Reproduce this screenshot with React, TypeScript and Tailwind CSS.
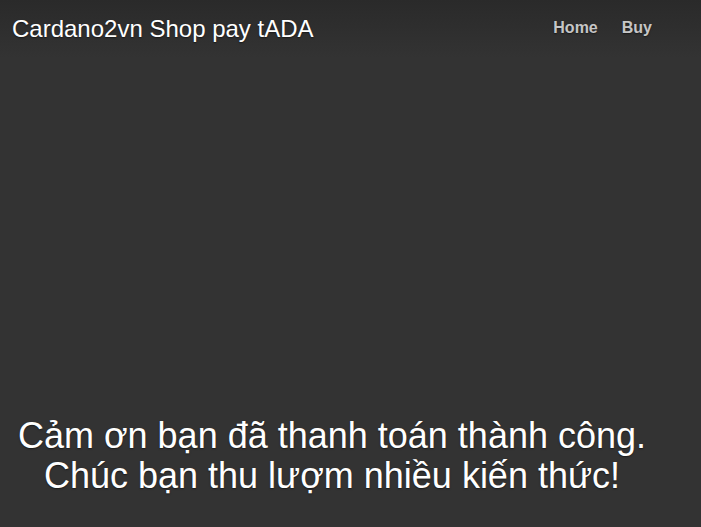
export default function App() {
  return (
    <div className="flex h-[527px] w-full flex-col bg-[#333333] text-white [font-family:'Liberation_Sans',Arial,sans-serif] [text-shadow:0_0.05rem_0.1rem_rgba(0,0,0,0.5)]">
      <header className="flex h-[58px] items-start justify-between bg-gradient-to-b from-[#2a2a2a] to-[#333333] pl-3 pr-[49px]">
        <h3 className="mt-[14px] text-[24px] leading-[30px] font-normal">Cardano2vn Shop pay tADA</h3>
        <nav className="mt-[18px] flex gap-6 text-base font-bold leading-5 text-white/75">
          <a href="#">Home</a>
          <a href="#">Buy</a>
        </nav>
      </header>

      <main className="flex flex-1 flex-col justify-end pb-[31px]">
        <h1 className="w-[664px] text-center text-[36px] leading-[40px] font-normal">
          Cảm ơn bạn đã thanh toán thành công.
          <br />
          Chúc bạn thu lượm nhiều kiến thức!
        </h1>
      </main>
    </div>
  );
}
